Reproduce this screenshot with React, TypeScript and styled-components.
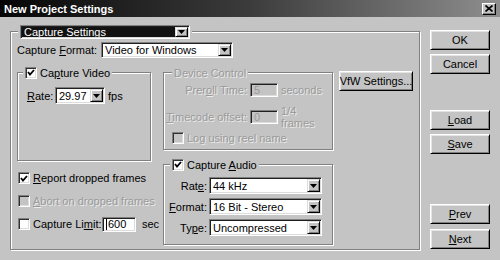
import React from "react";
import styled, { createGlobalStyle } from "styled-components";

const GlobalStyle = createGlobalStyle`
    html, body {
        margin: 0;
        padding: 0;
        background: #c4c4c4;
    }
    body {
        font-family: "Liberation Sans", Arial, sans-serif;
        font-size: 11px;
        color: #000;
    }
`;

const Window = styled.div`
    width: 500px;
    height: 260px;
    background: #c4c4c4;
    overflow: hidden;
    display: flex;
    flex-direction: column;
`;

const TitleBar = styled.div`
    height: 17px;
    flex: none;
    display: flex;
    align-items: center;
    justify-content: space-between;
    padding: 0 4px 0 4px;
    background: linear-gradient(to right, #050505 0%, #3c3c3c 50%, #8e8e8e 100%);
    color: #fff;
    font-weight: bold;
    font-size: 11px;
`;

const CloseButton = styled.span`
    width: 14px;
    height: 12px;
    box-sizing: border-box;
    background: #c4c4c4;
    border: 1px solid;
    border-color: #fff #000 #000 #fff;
    box-shadow: inset -1px -1px 0 #808080;
    display: flex;
    align-items: center;
    justify-content: center;
`;

const Body = styled.div`
    flex: 1;
    display: flex;
    gap: 10px;
    padding: 0 10px;
`;

const MainGroup = styled.fieldset`
    margin: 8px 0 0;
    padding: 4px 5px 0 6px;
    width: 410px;
    height: 225px;
    box-sizing: border-box;
    min-inline-size: 0;
    border: 1px solid #808080;
    box-shadow: inset 1px 1px 0 #fff, 1px 1px 0 #fff;
`;

const Group = styled.fieldset<{ $h: number }>`
    margin: 0;
    padding: 0;
    height: ${(p) => p.$h}px;
    box-sizing: border-box;
    min-inline-size: 0;
    border: 1px solid #808080;
    box-shadow: inset 1px 1px 0 #fff, 1px 1px 0 #fff;
`;

const Legend = styled.legend<{ $indent: number }>`
    margin-left: ${(p) => p.$indent}px;
    padding: 0 2px;
    background: #c4c4c4;
    display: flex;
    align-items: center;
    gap: 3px;
    height: 13px;
`;

const Row = styled.div<{ $gap?: number }>`
    display: flex;
    align-items: center;
    gap: ${(p) => p.$gap ?? 4}px;
`;

const Label = styled.span<{ $w?: number; $right?: boolean; $off?: boolean }>`
    width: ${(p) => (p.$w ? `${p.$w}px` : "auto")};
    flex: none;
    text-align: ${(p) => (p.$right ? "right" : "left")};
    white-space: nowrap;
    color: ${(p) => (p.$off ? "#9a9a9a" : "#000")};
    text-shadow: ${(p) => (p.$off ? "1px 1px 0 #ececec" : "none")};
`;

const Key = styled.span`
    text-decoration: underline;
`;

const Columns = styled.div`
    display: flex;
    margin-top: 8px;
`;

const Column = styled.div<{ $w: number; $mr?: number }>`
    width: ${(p) => p.$w}px;
    margin-right: ${(p) => p.$mr ?? 0}px;
    display: flex;
    flex-direction: column;
`;

const GroupBody = styled.div<{ $pad: string }>`
    padding: ${(p) => p.$pad};
`;

const OptionList = styled.div`
    display: flex;
    flex-direction: column;
    gap: 7px;
    margin-top: 9px;
    padding-left: 1px;
`;

const OptionRow = styled.div`
    height: 16px;
    display: flex;
    align-items: center;
    gap: 3px;
`;

const Box = styled.span<{ $off?: boolean }>`
    width: 12px;
    height: 12px;
    flex: none;
    box-sizing: border-box;
    background: ${(p) => (p.$off ? "#c4c4c4" : "#fff")};
    border: 1px solid;
    border-color: #808080 #fff #fff #808080;
    box-shadow: inset 1px 1px 0 #303030, inset -1px -1px 0 #dcdcdc;
    display: flex;
    align-items: center;
    justify-content: center;
`;

const Field = styled.div<{ $w: number; $h?: number; $dark?: boolean }>`
    width: ${(p) => p.$w}px;
    height: ${(p) => p.$h ?? 17}px;
    flex: none;
    box-sizing: border-box;
    background: ${(p) => (p.$dark ? "#121212" : "#fff")};
    color: ${(p) => (p.$dark ? "#fff" : "#000")};
    border: 1px solid;
    border-color: #808080 #fff #fff #808080;
    box-shadow: inset 1px 1px 0 #202020, inset -1px -1px 0 #dcdcdc;
    display: flex;
    align-items: stretch;
    padding: 1px;
`;

const FieldText = styled.span`
    flex: 1;
    display: flex;
    align-items: center;
    padding-left: 2px;
    white-space: nowrap;
    overflow: hidden;
`;

const ArrowButton = styled.span`
    width: 13px;
    flex: none;
    box-sizing: border-box;
    background: #c4c4c4;
    border: 1px solid;
    border-color: #dcdcdc #000 #000 #dcdcdc;
    box-shadow: inset 1px 1px 0 #fff, inset -1px -1px 0 #808080;
    display: flex;
    align-items: center;
    justify-content: center;
`;

const TextBox = styled.div<{ $w: number; $h: number; $off?: boolean }>`
    width: ${(p) => p.$w}px;
    height: ${(p) => p.$h}px;
    flex: none;
    box-sizing: border-box;
    background: ${(p) => (p.$off ? "#c4c4c4" : "#fff")};
    color: ${(p) => (p.$off ? "#9a9a9a" : "#000")};
    border: 1px solid;
    border-color: #808080 #fff #fff #808080;
    box-shadow: inset 1px 1px 0 #202020, inset -1px -1px 0 #dcdcdc;
    display: flex;
    align-items: center;
    padding-left: 3px;
`;

const Caret = styled.span`
    width: 1px;
    height: 11px;
    background: #000;
    margin-right: 1px;
`;

const DeviceGrid = styled.div`
    display: grid;
    grid-template-columns: 81px 28px auto;
    column-gap: 3px;
    row-gap: 8px;
    align-items: center;
    padding: 4px 0 0 2px;
`;

const Stacked = styled.span`
    color: #9a9a9a;
    text-shadow: 1px 1px 0 #ececec;
    line-height: 12px;
    align-self: start;
`;

const LogRow = styled.div`
    grid-column: 1 / -1;
    display: flex;
    align-items: center;
    gap: 3px;
    padding-left: 6px;
    margin-top: -5px;
`;

const AudioGrid = styled.div`
    display: grid;
    grid-template-columns: 43px 113px;
    column-gap: 2px;
    row-gap: 4px;
    align-items: center;
    padding-top: 6px;
`;

const ButtonColumn = styled.div`
    width: 60px;
    display: flex;
    flex-direction: column;
`;

const Button = styled.div<{ $top?: number; $w?: number }>`
    width: ${(p) => p.$w ?? 60}px;
    height: 20px;
    margin-top: ${(p) => p.$top ?? 0}px;
    box-sizing: border-box;
    background: #c4c4c4;
    border: 1px solid;
    border-color: #fff #000 #000 #fff;
    box-shadow: inset 1px 1px 0 #e4e4e4, inset -1px -1px 0 #808080;
    display: flex;
    align-items: center;
    justify-content: center;
    white-space: nowrap;
`;

const Check = () => (
    <svg width="8" height="7" viewBox="0 0 8 7">
        <polyline points="1,3 3,5.5 7,1" fill="none" stroke="#000" strokeWidth="1.8" />
    </svg>
);

const Arrow = () => (
    <svg width="7" height="4" viewBox="0 0 7 4">
        <polygon points="0,0 7,0 3.5,4" fill="#000" />
    </svg>
);

const CheckBox = ({ checked, off }: { checked?: boolean; off?: boolean }) => (
    <Box $off={off}>{checked ? <Check /> : null}</Box>
);

const Select = ({ w, h, dark, value }: { w: number; h?: number; dark?: boolean; value: string }) => (
    <Field $w={w} $h={h} $dark={dark}>
        <FieldText>{value}</FieldText>
        <ArrowButton>
            <Arrow />
        </ArrowButton>
    </Field>
);

export default function App() {
    return (
        <Window>
            <GlobalStyle />
            <TitleBar>
                <span>New Project Settings</span>
                <CloseButton>
                    <svg width="8" height="7" viewBox="0 0 8 7">
                        <path d="M0.5 0.5 L7.5 6.5 M7.5 0.5 L0.5 6.5" stroke="#000" strokeWidth="1.7" />
                    </svg>
                </CloseButton>
            </TitleBar>
            <Body>
                <MainGroup>
                    <Legend $indent={1}>
                        <Select w={170} h={14} dark value="Capture Settings" />
                    </Legend>
                    <Row>
                        <Label $w={80}>
                            Capture <Key>F</Key>ormat:
                        </Label>
                        <Select w={132} h={16} value="Video for Windows" />
                    </Row>
                    <Columns>
                        <Column $w={134} $mr={12}>
                            <Group $h={95}>
                                <Legend $indent={5}>
                                    <CheckBox checked />
                                    <span>
                                        Ca<Key>p</Key>ture Video
                                    </span>
                                </Legend>
                                <GroupBody $pad="8px 0 0 9px">
                                    <Row $gap={0}>
                                        <Label $w={28}>
                                            <Key>R</Key>ate:
                                        </Label>
                                        <Select w={50} value="29.97" />
                                        <Label style={{ marginLeft: 3 }}>fps</Label>
                                    </Row>
                                </GroupBody>
                            </Group>
                            <OptionList>
                                <OptionRow>
                                    <CheckBox checked />
                                    <Label>
                                        <Key>R</Key>eport dropped frames
                                    </Label>
                                </OptionRow>
                                <OptionRow>
                                    <CheckBox off />
                                    <Label $off>
                                        <Key>A</Key>bort on dropped frames
                                    </Label>
                                </OptionRow>
                                <OptionRow>
                                    <CheckBox />
                                    <Label $w={66}>
                                        Capture Li<Key>m</Key>it:
                                    </Label>
                                    <TextBox $w={34} $h={15}>
                                        <Caret />
                                        600
                                    </TextBox>
                                    <Label style={{ marginLeft: 3 }}>sec</Label>
                                </OptionRow>
                            </OptionList>
                        </Column>
                        <Column $w={170} $mr={6}>
                            <Group $h={84}>
                                <Legend $indent={8}>
                                    <Label $off>Device Control</Label>
                                </Legend>
                                <DeviceGrid>
                                    <Label $right $off>
                                        Prer<Key>o</Key>ll Time:
                                    </Label>
                                    <TextBox $w={28} $h={14} $off>
                                        5
                                    </TextBox>
                                    <Label $off>seconds</Label>
                                    <Label $right $off>
                                        <Key>T</Key>imecode offset:
                                    </Label>
                                    <TextBox $w={28} $h={14} $off>
                                        0
                                    </TextBox>
                                    <Stacked>
                                        1/4
                                        <br />
                                        frames
                                    </Stacked>
                                    <LogRow>
                                        <CheckBox off />
                                        <Label $off>
                                            Lo<Key>g</Key> using reel name
                                        </Label>
                                    </LogRow>
                                </DeviceGrid>
                            </Group>
                            <Group $h={87} style={{ marginTop: 8 }}>
                                <Legend $indent={6}>
                                    <CheckBox checked />
                                    <span>
                                        Capture <Key>A</Key>udio
                                    </span>
                                </Legend>
                                <AudioGrid>
                                    <Label $right>
                                        Rat<Key>e</Key>:
                                    </Label>
                                    <Select w={113} value="44 kHz" />
                                    <Label $right>
                                        <Key>F</Key>ormat:
                                    </Label>
                                    <Select w={113} value="16 Bit - Stereo" />
                                    <Label $right>
                                        Ty<Key>p</Key>e:
                                    </Label>
                                    <Select w={113} value="Uncompressed" />
                                </AudioGrid>
                            </Group>
                        </Column>
                        <Column $w={74}>
                            <Button $w={74} $top={5}>
                                VfW Settings...
                            </Button>
                        </Column>
                    </Columns>
                </MainGroup>
                <ButtonColumn>
                    <Button $top={13}>OK</Button>
                    <Button $top={4}>Cancel</Button>
                    <Button $top={36}>
                        <Key>L</Key>oad
                    </Button>
                    <Button $top={4}>
                        <Key>S</Key>ave
                    </Button>
                    <Button $top={50}>
                        <Key>P</Key>rev
                    </Button>
                    <Button $top={5}>
                        <Key>N</Key>ext
                    </Button>
                </ButtonColumn>
            </Body>
        </Window>
    );
}
